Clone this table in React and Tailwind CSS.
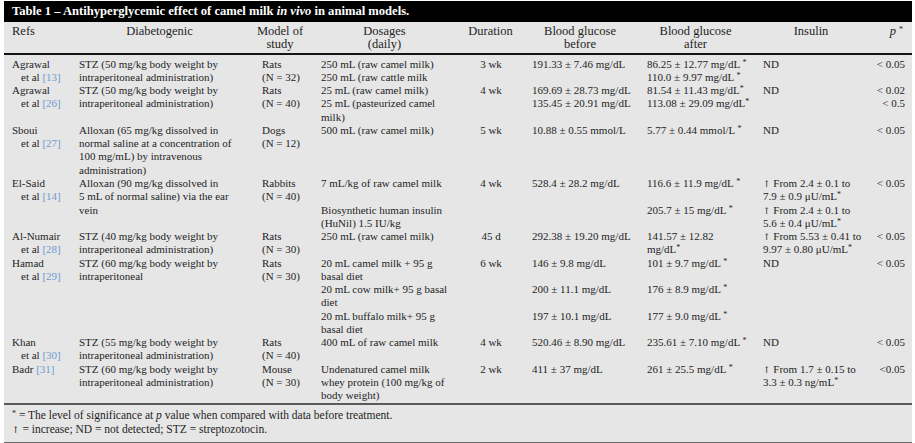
import React from 'react'

const rows = [
    {
        name: 'Agrawal', ref: '13',
        diab: ['STZ (50 mg/kg body weight by', 'intraperitoneal administration)'],
        model: ['Rats', '(N = 32)'],
        dose: ['250 mL (raw camel milk)', '250 mL (raw cattle milk'],
        dur: ['3 wk'],
        before: ['191.33 ± 7.46 mg/dL'],
        after: ['86.25 ± 12.77 mg/dL *', '110.0 ± 9.97 mg/dL *'],
        ins: ['ND'],
        p: ['< 0.05'],
    },
    {
        name: 'Agrawal', ref: '26',
        diab: ['STZ (50 mg/kg body weight by', 'intraperitoneal administration)'],
        model: ['Rats', '(N = 40)'],
        dose: ['25 mL (raw camel milk)', '25 mL (pasteurized camel', 'milk)'],
        dur: ['4 wk'],
        before: ['169.69 ± 28.73 mg/dL', '135.45 ± 20.91 mg/dL'],
        after: ['81.54 ± 11.43 mg/dL*', '113.08 ± 29.09 mg/dL*'],
        ins: ['ND'],
        p: ['< 0.02', '< 0.5'],
    },
    {
        name: 'Sboui', ref: '27',
        diab: ['Alloxan (65 mg/kg dissolved in', 'normal saline at a concentration of', '100 mg/mL) by intravenous', 'administration)'],
        model: ['Dogs', '(N = 12)'],
        dose: ['500 mL (raw camel milk)'],
        dur: ['5 wk'],
        before: ['10.88 ± 0.55 mmol/L'],
        after: ['5.77 ± 0.44 mmol/L *'],
        ins: ['ND'],
        p: ['< 0.05'],
    },
    {
        name: 'El-Said', ref: '14',
        diab: ['Alloxan (90 mg/kg dissolved in', '5 mL of normal saline) via the ear', 'vein'],
        model: ['Rabbits', '(N = 40)'],
        dose: ['7 mL/kg of raw camel milk', '', 'Biosynthetic human insulin', '(HuNil) 1.5 IU/kg'],
        dur: ['4 wk'],
        before: ['528.4 ± 28.2 mg/dL'],
        after: ['116.6 ± 11.9 mg/dL *', '', '205.7 ± 15 mg/dL *'],
        ins: ['↑ From 2.4 ± 0.1 to', '7.9 ± 0.9 μU/mL*', '↑ From 2.4 ± 0.1 to', '5.6 ± 0.4 μU/mL*'],
        p: ['< 0.05'],
    },
    {
        name: 'Al-Numair', ref: '28',
        diab: ['STZ (40 mg/kg body weight by', 'intraperitoneal administration)'],
        model: ['Rats', '(N = 30)'],
        dose: ['250 mL (raw camel milk)'],
        dur: ['45 d'],
        before: ['292.38 ± 19.20 mg/dL'],
        after: ['141.57 ± 12.82', 'mg/dL*'],
        ins: ['↑ From 5.53 ± 0.41 to', '9.97 ± 0.80 μU/mL*'],
        p: ['< 0.05'],
    },
    {
        name: 'Hamad', ref: '29',
        diab: ['STZ (60 mg/kg body weight by', 'intraperitoneal'],
        model: ['Rats', '(N = 30)'],
        dose: ['20 mL camel milk + 95 g', 'basal diet', '20 mL cow milk+ 95 g basal', 'diet', '20 mL buffalo milk+ 95 g', 'basal diet'],
        dur: ['6 wk'],
        before: ['146 ± 9.8 mg/dL', '', '200 ± 11.1 mg/dL', '', '197 ± 10.1 mg/dL'],
        after: ['101 ± 9.7 mg/dL *', '', '176 ± 8.9 mg/dL *', '', '177 ± 9.0 mg/dL *'],
        ins: ['ND'],
        p: ['< 0.05'],
    },
    {
        name: 'Khan', ref: '30',
        diab: ['STZ (55 mg/kg body weight by', 'intraperitoneal administration)'],
        model: ['Rats', '(N = 40)'],
        dose: ['400 mL of raw camel milk'],
        dur: ['4 wk'],
        before: ['520.46 ± 8.90 mg/dL'],
        after: ['235.61 ± 7.10 mg/dL *'],
        ins: ['ND'],
        p: ['< 0.05'],
    },
    {
        name: 'Badr', ref: '31', inline: true,
        diab: ['STZ (60 mg/kg body weight by', 'intraperitoneal administration)'],
        model: ['Mouse', '(N = 30)'],
        dose: ['Undenatured camel milk', 'whey protein (100 mg/kg of', 'body weight)'],
        dur: ['2 wk'],
        before: ['411 ± 37 mg/dL'],
        after: ['261 ± 25.5 mg/dL *'],
        ins: ['↑ From 1.7 ± 0.15 to', '3.3 ± 0.3 ng/mL*'],
        p: ['<0.05'],
    },
]

// raised asterisk
function Star() {
    return <span className="relative -top-[3px] text-[8px] leading-none">*</span>
}

function Up() {
    return <span className="font-['DejaVu_Serif',serif] text-[9px] text-[#1e1e1e]">↑</span>
}

function fmt(s) {
    const up = s.startsWith('↑')
    const rest = up ? s.slice(1) : s
    const parts = rest.split('*')
    return (
        <>
            {up && <Up />}
            {parts.map((part, i) => (
                <React.Fragment key={i}>
                    {part}
                    {i < parts.length - 1 && <Star />}
                </React.Fragment>
            ))}
        </>
    )
}

function Lines({ lines, className = '' }) {
    return (
        <div className={className}>
            {lines.map((l, i) => (
                <div key={i} className="h-[13.28px] leading-[13.28px] whitespace-nowrap">
                    {fmt(l)}
                </div>
            ))}
        </div>
    )
}

function Ref({ n }) {
    return <span className="text-[#6f9bcf]">[{n}]</span>
}

export default function App() {
    return (
        <div className="w-[915px] h-[443px] bg-white pt-px font-['Liberation_Serif',serif] text-[#1e1e1e]">
            <div className="ml-1 w-[908px] bg-[#e6e6e6]">
                {/* title */}
                <div className="h-[21px] bg-black flex items-center pl-2 text-white font-bold text-[12.6px] whitespace-nowrap">
                    Table 1 – Antihyperglycemic effect of camel milk&nbsp;<i>in vivo</i>&nbsp;in animal models.
                </div>

                {/* column heads */}
                <div className="flex pt-[3px] pb-px text-[12.5px] leading-[13.3px] whitespace-nowrap border-b-2 border-[#151515]">
                    <div className="w-[75px] pl-2">Refs</div>
                    <div className="w-[161px] text-center">Diabetogenic</div>
                    <div className="ml-[17px] w-[46px] flex flex-col items-center">
                        <span>Model of</span>
                        <span>study</span>
                    </div>
                    <div className="ml-[18px] w-[127px] text-center">Dosages<br />(daily)</div>
                    <div className="ml-[10px] w-[65px] text-center">Duration</div>
                    <div className="ml-[9px] w-[96px] text-center">Blood glucose<br />before</div>
                    <div className="ml-[19px] w-[97px] text-center">Blood glucose<br />after</div>
                    <div className="ml-[19px] w-[96px] text-center">Insulin</div>
                    <div className="w-[44px] text-right"><i>p</i> <Star /></div>
                </div>

                {/* body */}
                <div className="grid grid-cols-[75px_183px_59px_147px_64px_115px_116px_97px_45px] pt-[3px] text-[11px] border-b-2 border-[#5a5a5a]">
                    {rows.map((r, i) => (
                        <React.Fragment key={i}>
                            <div className="pl-2 leading-[13.28px] whitespace-nowrap">
                                {r.inline ? (
                                    <div className="h-[13.28px]">{r.name} <Ref n={r.ref} /></div>
                                ) : (
                                    <>
                                        <div className="h-[13.28px]">{r.name}</div>
                                        <div className="h-[13.28px] pl-[9px]">et al <Ref n={r.ref} /></div>
                                    </>
                                )}
                            </div>
                            <Lines lines={r.diab} />
                            <Lines lines={r.model} />
                            <Lines lines={r.dose} />
                            <Lines lines={r.dur} className="text-center pr-[18px]" />
                            <Lines lines={r.before} />
                            <Lines lines={r.after} />
                            <Lines lines={r.ins} />
                            <Lines lines={r.p} className="text-right" />
                        </React.Fragment>
                    ))}
                </div>

                {/* notes */}
                <div className="pl-2 pt-[3px] pb-[4px] text-[11.5px] leading-[14.5px] border-b-2 border-[#6a6a6a]">
                    <div><Star /> = The level of significance at <i>p</i> value when compared with data before treatment.</div>
                    <div><Up /> = increase; ND = not detected; STZ = streptozotocin.</div>
                </div>
            </div>
        </div>
    )
}
